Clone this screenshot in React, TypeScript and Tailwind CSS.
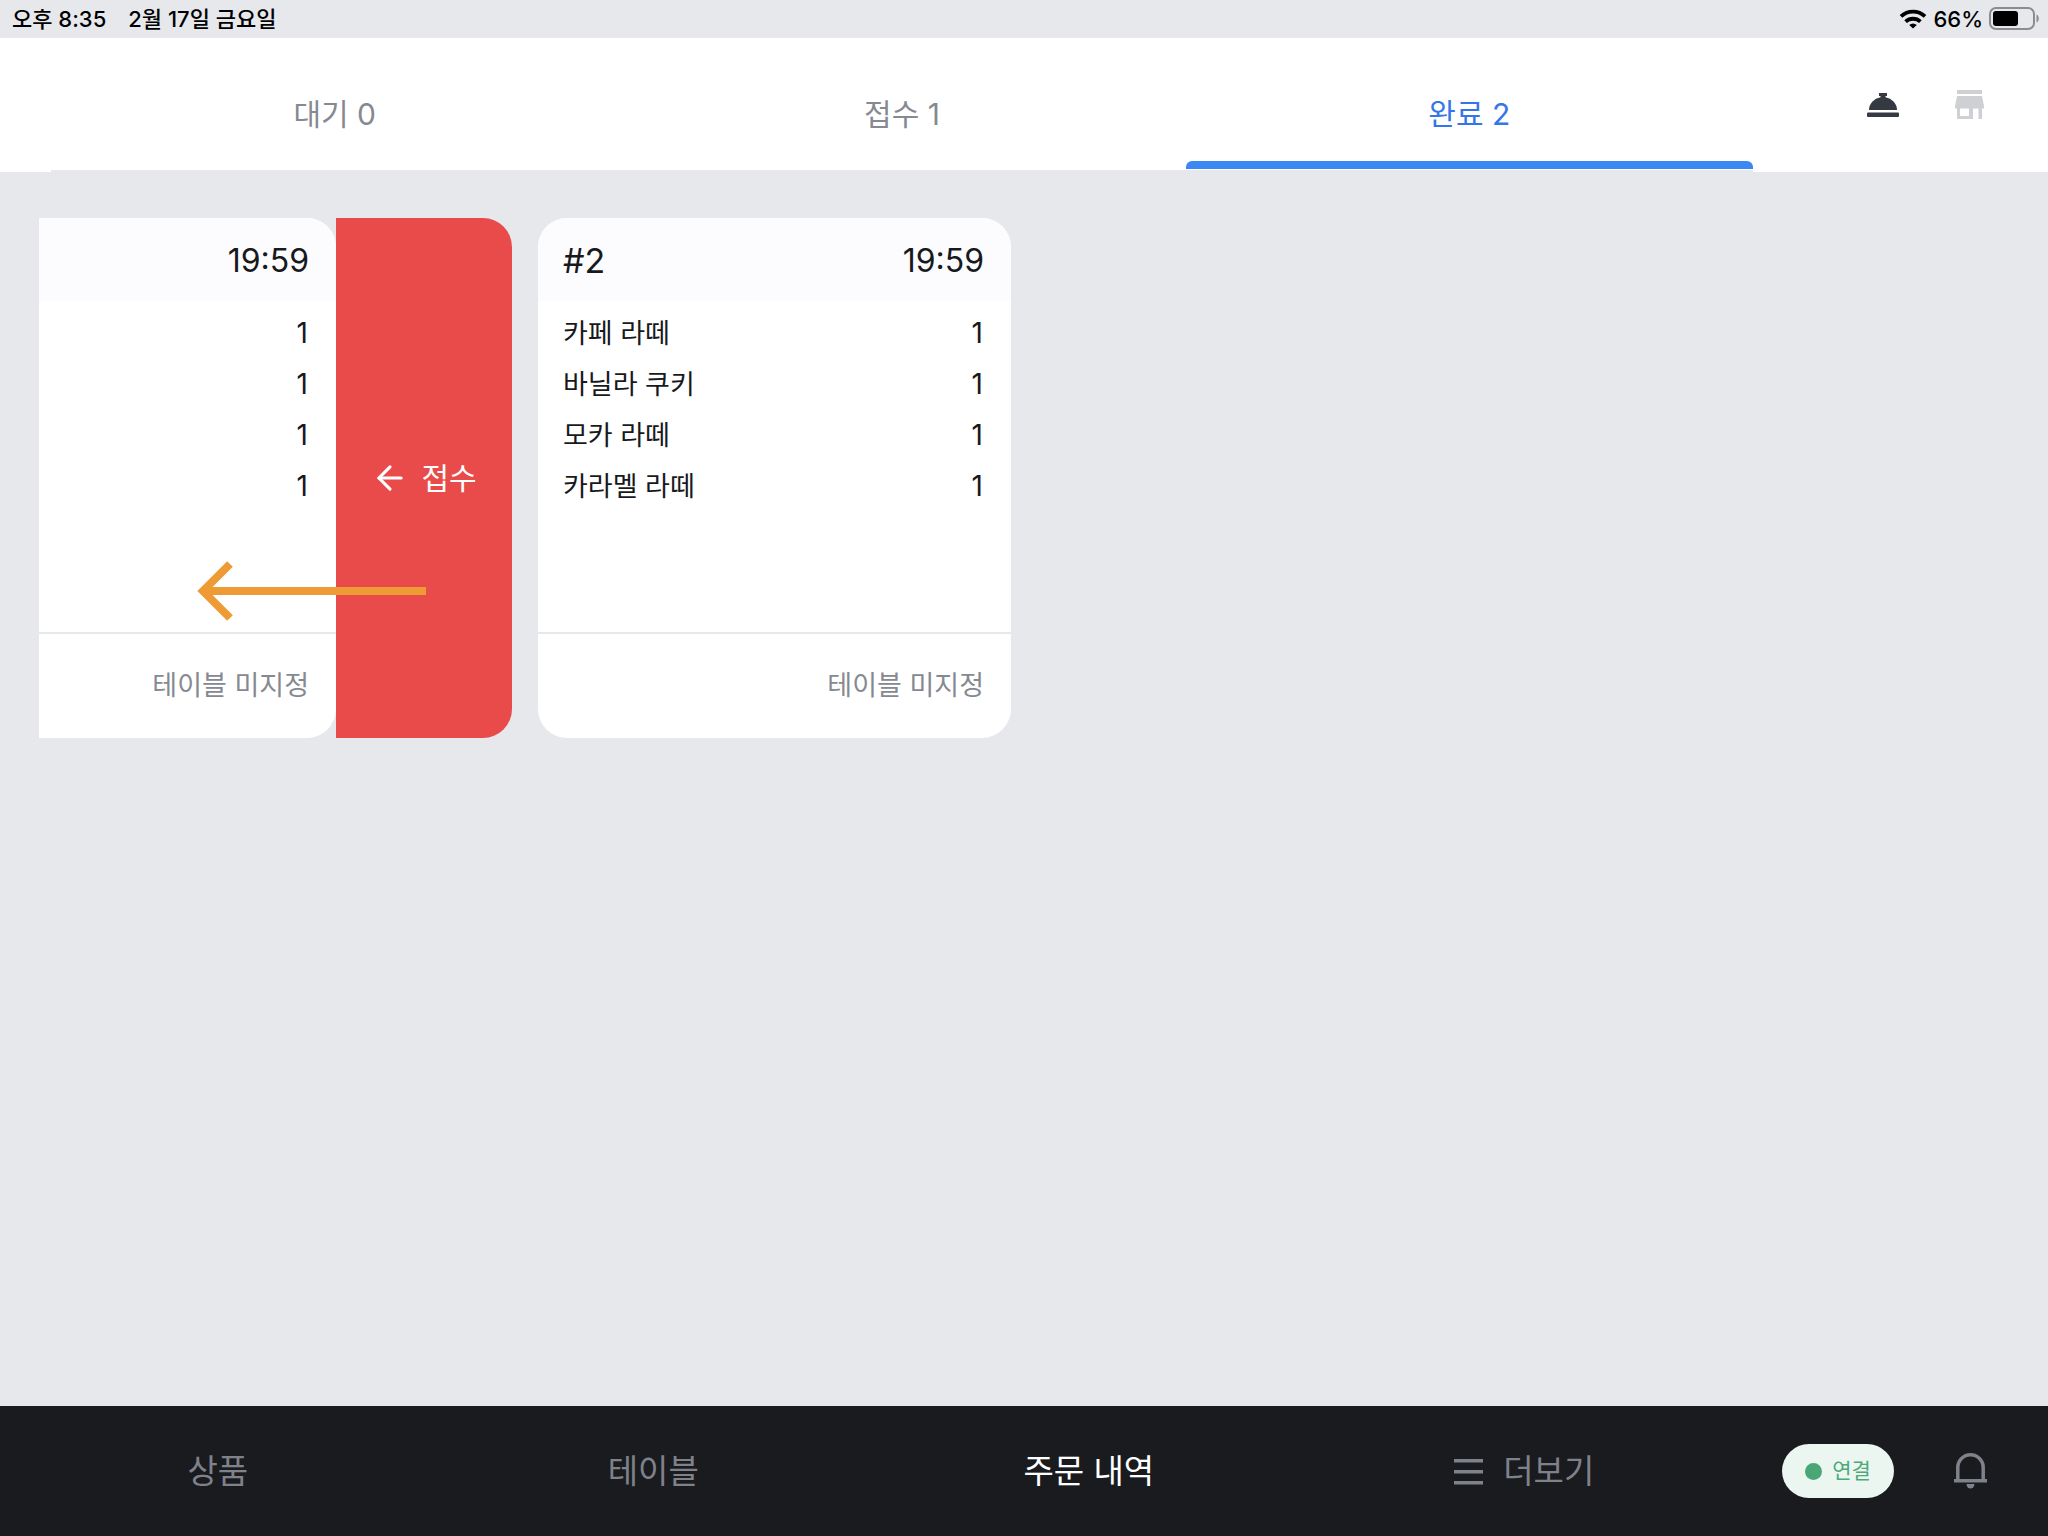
import { ArrowLeft } from "lucide-react";
import { useState } from "react";

type Order = {
  id: number;
  time: string;
  items: { name: string; count: number }[];
  table: string;
};

const tabs = ["대기 0", "접수 1", "완료 2"];

const menus = ["상품", "테이블", "주문 내역", "더보기"];

const items = [
  { name: "카페 라떼", count: 1 },
  { name: "바닐라 쿠키", count: 1 },
  { name: "모카 라떼", count: 1 },
  { name: "카라멜 라떼", count: 1 },
];

const orders: Order[] = [
  { id: 1, time: "19:59", items, table: "테이블 미지정" },
  { id: 2, time: "19:59", items, table: "테이블 미지정" },
];

function StatusBar() {
  return (
    <div className="flex h-[38px] items-center justify-between pl-3 pr-2 text-[22px] leading-8 font-medium text-black">
      <div className="flex gap-[22px]">
        <span>오후 8:35</span>
        <span>2월 17일 금요일</span>
      </div>
      <div className="flex items-center gap-[6px]">
        <svg width="28" height="20" viewBox="0 0 28 20" fill="none" stroke="black" strokeWidth="3.8">
          <path d="M2 7.400a17.500 17.500 0 0 1 24 0" />
          <path d="M6.600 12.600a11 11 0 0 1 14.800 0" />
          <path d="M14 19.600l-3.800-3.600a5.400 5.400 0 0 1 7.600 0z" fill="black" stroke="none" />
        </svg>
        <span>66%</span>
        <svg width="51" height="24" viewBox="0 0 51 24" fill="none">
          <rect x="1" y="1" width="44" height="21" rx="6" stroke="#8b8c90" strokeWidth="2" />
          <rect x="4" y="4" width="25" height="15" rx="3" fill="black" />
          <path d="M47.500 7.500c3 1 3 7 0 8z" fill="#8b8c90" />
        </svg>
      </div>
    </div>
  );
}

// a swiped card is pushed out to the left, so only its right part is left to show
function OrderContent({ order, swiped = false }: { order: Order; swiped?: boolean }) {
  return (
    <article
      className={
        swiped
          ? "flex h-full min-w-0 flex-1 flex-col overflow-hidden rounded-r-[29px] bg-white text-[#18191c]"
          : "flex h-full min-w-0 flex-1 flex-col overflow-hidden rounded-[29px] bg-white text-[#18191c]"
      }
    >
      <header className="flex h-[83px] items-center justify-between bg-[#fcfcfe] pt-[2px] pl-[25px] pr-[27px]">
        {!swiped && <h2 className="text-[34px] leading-10">#{order.id}</h2>}
        <time className="ml-auto text-[32px] leading-10">{order.time}</time>
      </header>
      <ul className="flex-1 pt-[7px] pl-[25px] pr-7 text-[27px] leading-[51px]">
        {order.items.map((item) => (
          <li key={item.name} className="flex justify-between">
            {!swiped && <span>{item.name}</span>}
            <span className="ml-auto text-[28px]">{item.count}</span>
          </li>
        ))}
      </ul>
      <footer className="flex h-[106px] items-center justify-end border-t-2 border-[#e7e8ec] px-[27px] text-[27px] text-[#868991]">
        {order.table}
      </footer>
    </article>
  );
}

export default function App() {
  const [tab, setTab] = useState(2);
  const [menu, setMenu] = useState(2);

  return (
    <div className="flex min-h-screen flex-col bg-[#e7e8ec] font-['Inter','Noto_Sans_CJK_KR',sans-serif]">
      <StatusBar />

      <header className="flex h-[134px] bg-white pl-[51px]">
        <div className="flex flex-1 border-b-2 border-[#e7e8ec]">
          {tabs.map((label, i) => (
            <button
              key={label}
              onClick={() => setTab(i)}
              className={
                i === tab
                  ? "flex flex-1 flex-col text-[30px] text-[#3476e8]"
                  : "flex flex-1 flex-col text-[30px] text-[#868991]"
              }
            >
              <span className="flex w-full flex-1 items-center justify-center pt-[30px]">{label}</span>
              <span
                className={
                  i === tab
                    ? "mb-px h-2 w-full rounded-t-md bg-[#3b87f3]"
                    : "mb-px h-2 w-full"
                }
              />
            </button>
          ))}
        </div>
        <div className="flex w-[295px] items-center justify-end gap-14 pr-16 pb-[2px]">
          <button aria-label="호출">
            <svg width="32" height="32" viewBox="0 0 32 32" fill="#353941">
              <path d="M12 5h8v3h-1.500v1.200a14 13 0 0 1 11.500 12.800H2a14 13 0 0 1 11.500-12.800V8H12z" />
              <rect y="24.500" width="32" height="4.500" rx="1" />
            </svg>
          </button>
          <button aria-label="매장">
            <svg width="29" height="29" viewBox="0 0 29 29" fill="#ced0d4">
              <path d="M2 0h25v4H2z" />
              <path
                fillRule="evenodd"
                d="M2 6h25l2 10v2.500h-2V29h-3.500V18.500H18V29H2V18.500H0V16zM5 18.500V26h9v-7.500z"
              />
            </svg>
          </button>
        </div>
      </header>

      <main className="flex flex-1 items-start gap-[26px] px-[39px] pt-[46px]">
        <div className="relative h-[520px] w-[473px]">
          <div className="flex h-full">
            <OrderContent order={orders[0]} swiped />
            <button className="flex w-[176px] shrink-0 items-center justify-center gap-3 rounded-r-[29px] bg-[#e84b4a] text-[30px] text-white">
              <ArrowLeft size={38} strokeWidth={2} />
              접수
            </button>
          </div>
          {/* swipe guide */}
          <svg
            className="absolute top-[342px] left-[158px]"
            width="230"
            height="62"
            viewBox="0 0 230 62"
            fill="none"
            stroke="#ef9b35"
            strokeWidth="8"
          >
            <path d="M33 4L6 31l27 27" />
            <path d="M6 31h223" />
          </svg>
        </div>
        <div className="flex h-[520px] w-[473px]">
          <OrderContent order={orders[1]} />
        </div>
      </main>

      <footer className="flex h-[130px] bg-[#1a1b1f]">
        <nav className="flex flex-1 pt-[2px]">
          {menus.map((label, i) => (
            <button
              key={label}
              onClick={() => setMenu(i)}
              className={
                i === menu
                  ? "flex flex-1 items-center justify-center gap-5 text-[33px] text-white"
                  : "flex flex-1 items-center justify-center gap-5 text-[33px] text-[#7f818b]"
              }
            >
              {label === "더보기" && (
                <svg width="29" height="26" viewBox="0 0 29 26" fill="currentColor">
                  <path d="M0 0h29v3.500H0zM0 11h29v3.500H0zM0 22h29v3.500H0z" />
                </svg>
              )}
              {label}
            </button>
          ))}
        </nav>
        <div className="flex w-[306px] items-center justify-end gap-[60px] pr-[61px]">
          <div className="flex h-[54px] w-[112px] items-center justify-center gap-[10px] rounded-full bg-[#ebf6f0] text-[21px] text-[#4ba97b]">
            <span className="size-[17px] rounded-full bg-[#4ba675]" />
            연결
          </div>
          <button aria-label="알림">
            <svg width="33" height="36" viewBox="0 0 33 36" fill="none" stroke="#7f818b" strokeWidth="3.5">
              <path d="M3.800 27V14.500a12.700 12.700 0 0 1 25.400 0V27" />
              <path d="M0 27.700h33" />
              <path d="M12.500 31h8a4 4.500 0 0 1-8 0z" fill="#7f818b" stroke="none" />
            </svg>
          </button>
        </div>
      </footer>
    </div>
  );
}
